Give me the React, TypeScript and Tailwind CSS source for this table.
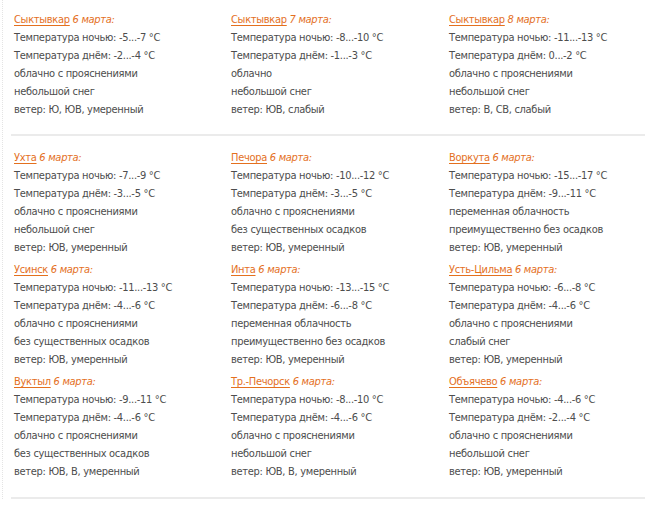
const rows = [
  [
    { city: "Сыктывкар", date: "6 марта:", night: "-5...-7", day: "-2...-4", sky: "облачно с прояснениями", fall: "небольшой снег", wind: "Ю, ЮВ, умеренный" },
    { city: "Сыктывкар", date: "7 марта:", night: "-8...-10", day: "-1...-3", sky: "облачно", fall: "небольшой снег", wind: "ЮВ, слабый" },
    { city: "Сыктывкар", date: "8 марта:", night: "-11...-13", day: "0...-2", sky: "облачно с прояснениями", fall: "небольшой снег", wind: "В, СВ, слабый" },
  ],
  [
    { city: "Ухта", date: "6 марта:", night: "-7...-9", day: "-3...-5", sky: "облачно с прояснениями", fall: "небольшой снег", wind: "ЮВ, умеренный" },
    { city: "Печора", date: "6 марта:", night: "-10...-12", day: "-3...-5", sky: "облачно с прояснениями", fall: "без существенных осадков", wind: "ЮВ, умеренный" },
    { city: "Воркута", date: "6 марта:", night: "-15...-17", day: "-9...-11", sky: "переменная облачность", fall: "преимущественно без осадков", wind: "ЮВ, умеренный" },
  ],
  [
    { city: "Усинск", date: "6 марта:", night: "-11...-13", day: "-4...-6", sky: "облачно с прояснениями", fall: "без существенных осадков", wind: "ЮВ, умеренный" },
    { city: "Инта", date: "6 марта:", night: "-13...-15", day: "-6...-8", sky: "переменная облачность", fall: "преимущественно без осадков", wind: "ЮВ, умеренный" },
    { city: "Усть-Цильма", date: "6 марта:", night: "-6...-8", day: "-4...-6", sky: "облачно с прояснениями", fall: "слабый снег", wind: "ЮВ, умеренный" },
  ],
  [
    { city: "Вуктыл", date: "6 марта:", night: "-9...-11", day: "-4...-6", sky: "облачно с прояснениями", fall: "без существенных осадков", wind: "ЮВ, В, умеренный" },
    { city: "Тр.-Печорск", date: "6 марта:", night: "-8...-10", day: "-4...-6", sky: "облачно с прояснениями", fall: "небольшой снег", wind: "ЮВ, В, умеренный" },
    { city: "Объячево", date: "6 марта:", night: "-4...-6", day: "-2...-4", sky: "облачно с прояснениями", fall: "небольшой снег", wind: "ЮВ, умеренный" },
  ],
];

type Forecast = (typeof rows)[number][number];

function Card({ f }: { f: Forecast }) {
  return (
    <div className="flex flex-col">
      <div className="text-[#e4701e]">
        <span className="underline underline-offset-2">{f.city}</span>{" "}
        <span className="italic">{f.date}</span>
      </div>
      <div>Температура ночью: {f.night} °C</div>
      <div>Температура днём: {f.day} °C</div>
      <div>{f.sky}</div>
      <div>{f.fall}</div>
      <div>ветер: {f.wind}</div>
    </div>
  );
}

export default function App() {
  return (
    <div className="h-[512px] w-[645px] overflow-hidden bg-white font-['DejaVu_Sans_Condensed','Liberation_Sans',sans-serif] text-[11px] leading-[18px] tracking-[-0.3px] text-[#4d4d4d]">
      <div className="ml-[2px] border-l border-dotted border-[#e4e4e4] pl-[8px] pt-[11px]">
        <div className="grid grid-cols-[217px_218px_1fr] pl-[3px]">
          {rows[0].map((f, i) => (
            <Card key={i} f={f} />
          ))}
        </div>
        <div className="mt-[15px] h-[2px] bg-[#ebebeb]" />
        <div className="flex flex-col gap-[4px] pt-[13px]">
          {rows.slice(1).map((row, r) => (
            <div key={r} className="grid grid-cols-[217px_218px_1fr] pl-[3px]">
              {row.map((f, i) => (
                <Card key={i} f={f} />
              ))}
            </div>
          ))}
        </div>
        <div className="mt-[16px] h-[2px] bg-[#ebebeb]" />
      </div>
    </div>
  );
}
